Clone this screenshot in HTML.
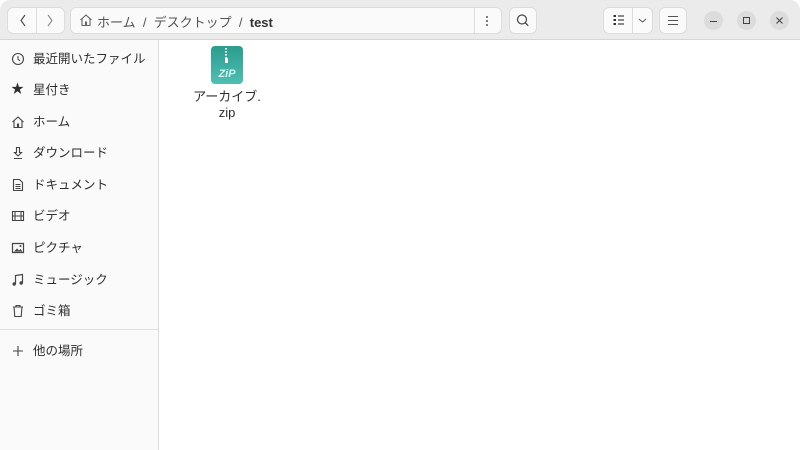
<!DOCTYPE html>
<html><head><meta charset="utf-8"><style>
*{margin:0;padding:0;box-sizing:border-box}
body{width:800px;height:450px;overflow:hidden;background:#fff;font-family:"Liberation Sans","Noto Sans CJK JP",sans-serif;font-size:13px;color:#2e2e2e;position:relative}
.hdr{position:absolute;left:0;top:0;width:800px;height:40px;background:#ebebeb;border-bottom:1px solid #d6d6d6;border-radius:10px 10px 0 0}
.btn{position:absolute;top:7px;height:27px;background:#fafafa;border:1px solid #dcdcdc;border-radius:6px}
.side{position:absolute;left:0;top:40px;width:159px;height:410px;background:#fafafa;border-right:1px solid #dedede}
.it{position:absolute;left:33px;font-size:12.5px;line-height:16px}
.ic{position:absolute;left:11px;width:14px;height:14px}
.wc{position:absolute;top:11px;width:19px;height:19px;border-radius:50%;background:#dcdcdc}
svg{display:block}
</style></head><body>
<div class="hdr">
<div class="btn" style="left:7px;width:58px"><div style="position:absolute;left:28px;top:0;width:1px;height:25px;background:#dcdcdc"></div>
<svg width="58" height="25" style="position:absolute;left:0;top:0"><path d="M17 7l-4 5.5 4 5.5" stroke="#444" fill="none" stroke-width="1.1"/><path d="M40 7l4 5.5-4 5.5" stroke="#888" fill="none" stroke-width="1.1"/></svg></div>
<div class="btn" style="left:70px;width:432px"><div style="position:absolute;left:403px;top:0;width:1px;height:25px;background:#dcdcdc"></div>
<svg width="14" height="14" style="position:absolute;left:8px;top:5px"><path d="M1.5 7L7 2l5.5 5M3 6v6.5h3.5V9h1v3.5H11V6" stroke="#666" fill="none" stroke-width="1.1"/></svg>
<div style="position:absolute;left:26px;top:4px;color:#555;font-size:13px">ホーム &nbsp;/&nbsp; デスクトップ &nbsp;/&nbsp; <b style="color:#333">test</b></div>
<div style="position:absolute;left:415px;top:7px;width:2px;height:11px;background:radial-gradient(circle,#555 0.9px,transparent 1px) 0 0/2px 4px"></div></div>
<div class="btn" style="left:509px;width:28px"><svg width="26" height="25"><circle cx="12" cy="11.5" r="4.5" stroke="#444" fill="none" stroke-width="1.2"/><path d="M15.2 14.7l3 3" stroke="#444" stroke-width="1.3"/></svg></div>
<div class="btn" style="left:603px;width:50px"><div style="position:absolute;left:28px;top:0;width:1px;height:25px;background:#dcdcdc"></div>
<svg width="48" height="25"><path d="M9.5 8h2.5M9.5 12h2.5M9.5 16h2.5" stroke="#333" stroke-width="2"/><path d="M14 8h6M14 12h6M14 16h6" stroke="#444" stroke-width="1.2"/><path d="M35 11l3.5 3 3.5-3" stroke="#555" fill="none" stroke-width="1"/></svg></div>
<div class="btn" style="left:659px;width:28px"><svg width="26" height="25"><path d="M8 8.5h10M8 12.5h10M8 16.5h10" stroke="#555" stroke-width="1.1"/></svg></div>
<div class="wc" style="left:704px"><div style="position:absolute;left:6px;top:10px;width:7px;height:1px;background:#444"></div></div>
<div class="wc" style="left:737px"><div style="position:absolute;left:6px;top:6px;width:7px;height:7px;border:1px solid #444"></div></div>
<div class="wc" style="left:770px"><svg width="19" height="19"><path d="M6.5 6.5l6 6M12.5 6.5l-6 6" stroke="#444" stroke-width="1.1"/></svg></div>
</div>
<div class="side">
<svg class="ic" style="top:12px" width="14" height="14"><circle cx="7" cy="7" r="5.5" stroke="#444" fill="none" stroke-width="1.1"/><path d="M7 4v3.3l2 1.5" stroke="#444" fill="none"/></svg><div class="it" style="top:11px">最近開いたファイル</div>
<div class="ic" style="top:42px;font-size:13px;line-height:14px">★</div><div class="it" style="top:42px">星付き</div>
<svg class="ic" style="top:75px" width="14" height="14"><path d="M1.5 7L7 2l5.5 5M3 6v6.5h3.5V9h1v3.5H11V6" stroke="#444" fill="none" stroke-width="1.1"/></svg><div class="it" style="top:74px">ホーム</div>
<svg class="ic" style="top:106px" width="14" height="14"><path d="M5.5 1.5h3v5h2L7 10 3.5 6.5h2z M3 12.5h8" stroke="#444" fill="none" stroke-width="1.1"/></svg><div class="it" style="top:105px">ダウンロード</div>
<svg class="ic" style="top:138px" width="14" height="14"><path d="M2.5 1.5h6l3 3v8h-9z M4.5 6.5h5M4.5 8.5h5M4.5 10.5h5" stroke="#444" fill="none" stroke-width="1.1"/></svg><div class="it" style="top:137px">ドキュメント</div>
<svg class="ic" style="top:169px" width="14" height="14"><path d="M1.5 2.5h11v9h-11z M4 2.5v9M10 2.5v9M1.5 7h11" stroke="#444" fill="none" stroke-width="1.1"/></svg><div class="it" style="top:168px">ビデオ</div>
<svg class="ic" style="top:201px" width="14" height="14"><path d="M1.5 2.5h11v9h-11z" stroke="#444" fill="none" stroke-width="1.2"/><path d="M3 10.5l3-3 2 2 1.5-1.5 2 2.5z" fill="#444"/><circle cx="9.5" cy="5" r="1" fill="#444"/></svg><div class="it" style="top:200px">ピクチャ</div>
<svg class="ic" style="top:233px" width="14" height="14"><path d="M4.5 11V2.5l7-1V10" stroke="#444" fill="none" stroke-width="1.2"/><circle cx="3.2" cy="11" r="1.7" fill="#444"/><circle cx="10.2" cy="10" r="1.7" fill="#444"/></svg><div class="it" style="top:232px">ミュージック</div>
<svg class="ic" style="top:264px" width="14" height="14"><path d="M2 3h10M5 3V1.5h4V3M3 3l.8 9.5h6.4L11 3" stroke="#444" fill="none" stroke-width="1.1"/></svg><div class="it" style="top:263px">ゴミ箱</div>
<div style="position:absolute;left:0;top:289px;width:158px;height:1px;background:#e0e0e0"></div>
<svg class="ic" style="top:304px" width="14" height="14"><path d="M7 2v10M2 7h10" stroke="#444" stroke-width="1.1"/></svg><div class="it" style="top:303px">他の場所</div>
</div>
<svg style="position:absolute;left:211px;top:46px" width="32" height="38"><defs><linearGradient id="g" x1="0" y1="0" x2="0" y2="1"><stop offset="0" stop-color="#2a9d8f"/><stop offset="1" stop-color="#4fbfb3"/></linearGradient></defs><rect x="0" y="0" width="32" height="38" rx="4" fill="url(#g)"/><path d="M15 2v10" stroke="#fff" stroke-width="2" stroke-dasharray="1.5 1.5"/><rect x="14" y="12" width="3" height="5" fill="#fff"/><text x="16" y="31" fill="#d8f3f0" font-family="Liberation Sans" font-style="italic" font-weight="bold" font-size="11" text-anchor="middle">ZiP</text></svg>
<div style="position:absolute;left:180px;top:89px;width:94px;text-align:center;font-size:13px;line-height:16px">アーカイブ.<br>zip</div>
</body></html>
